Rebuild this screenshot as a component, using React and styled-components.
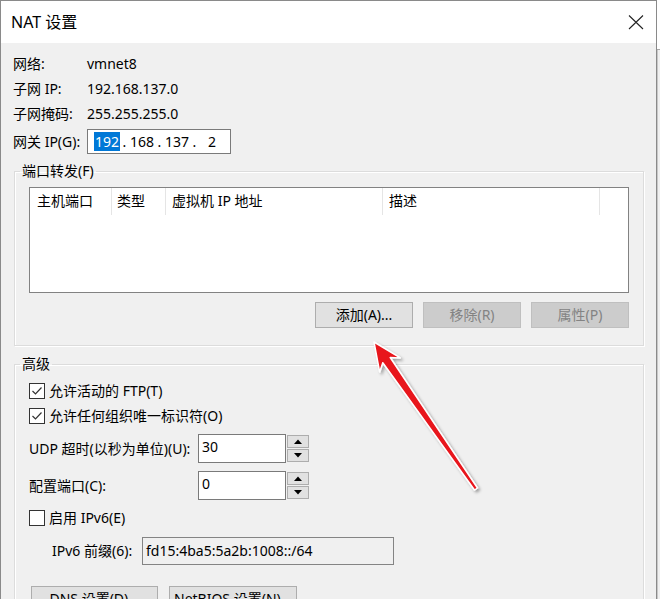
import React from 'react';
import styled, { createGlobalStyle } from 'styled-components';

const Global = createGlobalStyle`
  html, body { margin: 0; padding: 0; background: #f0f0f0; }
  body {
    width: 660px; height: 599px; overflow: hidden;
    font-family: "Noto Sans", "Noto Sans CJK SC", sans-serif;
    font-size: 14px; color: #000;
  }
  * { box-sizing: border-box; }
`;

const Screen = styled.div`
  position: relative;
  display: flex;
  width: 660px;
  height: 599px;
  overflow: hidden;
`;

const Dialog = styled.div`
  width: 657px;
  height: 640px;
  flex-shrink: 0;
  border: 1px solid #8a8a8a;
  border-bottom: none;
  background: #f0f0f0;
  display: flex;
  flex-direction: column;
`;

const TitleBar = styled.div`
  height: 42px;
  background: #fff;
  display: flex;
  align-items: center;
  justify-content: space-between;
  padding: 0 12px 0 10px;
  flex-shrink: 0;
`;

const Title = styled.div`
  font-size: 16px;
  line-height: 20px;
`;

const Body = styled.div`
  padding: 8px 11px 0 11px;
  display: flex;
  flex-direction: column;
`;

const InfoRow = styled.div`
  display: flex;
  align-items: center;
  height: 25px;
  line-height: 18px;
  margin-top: ${p => p.$mt || 0}px;
`;

const InfoLabel = styled.div`
  width: 75px;
  flex-shrink: 0;
  padding-left: 1px;
`;

const IpBox = styled.div`
  width: 144px;
  height: 25px;
  border: 1px solid #7a7a7a;
  background: #fff;
  display: flex;
  align-items: center;
  padding-left: 6px;
  line-height: 18px;
`;

const Octet = styled.span`
  width: 26px;
  text-align: center;
`;

const Selected = styled.span`
  background: #0078d7;
  color: #fff;
  padding: 0 1px;
`;

const Dot = styled.span`
  width: 9px;
  text-align: center;
`;

const Group = styled.fieldset`
  margin: ${p => p.$mt}px 0 0 2px;
  width: 630px;
  min-width: 0;
  padding: 0;
  border: 1px solid #dcdcdc;
  box-shadow: inset 1px 1px 0 #fff, 1px 1px 0 #fff;
`;

const Legend = styled.legend`
  margin-left: 5px;
  padding: 0 2px;
  height: 18px;
  line-height: 18px;
`;

const GroupBody = styled.div`
  padding: ${p => p.$pad};
  display: flex;
  flex-direction: column;
`;

const ListView = styled.div`
  height: 106px;
  border: 1px solid #828282;
  background: #fff;
`;

const ListHeader = styled.div`
  display: flex;
  height: 27px;
`;

const HeaderCell = styled.div`
  width: ${p => p.$w}px;
  padding-left: ${p => p.$pl}px;
  border-right: 1px solid #e5e5e5;
  line-height: 26px;
  flex-shrink: 0;
`;

const ButtonRow = styled.div`
  display: flex;
  justify-content: ${p => p.$start ? 'flex-start' : 'flex-end'};
  gap: ${p => p.$gap}px;
  margin-top: ${p => p.$mt}px;
  padding-left: ${p => p.$pl || 0}px;
`;

const Button = styled.button`
  width: ${p => p.$w}px;
  height: 26px;
  border: 1px solid ${p => p.disabled ? '#bfbfbf' : '#adadad'};
  background: ${p => p.disabled ? '#cccccc' : '#e1e1e1'};
  color: ${p => p.disabled ? '#838383' : '#000'};
  font-family: "Noto Sans", "Noto Sans CJK SC", sans-serif;
  font-size: 14px;
  line-height: 18px;
  padding: 0;
  flex-shrink: 0;
`;

const CheckRow = styled.label`
  display: flex;
  align-items: center;
  gap: 4px;
  height: 25px;
  line-height: 18px;
  margin-top: ${p => p.$mt || 0}px;
`;

const CheckBox = styled.span`
  width: 16px;
  height: 16px;
  border: 1px solid #333;
  background: #fff;
  display: flex;
  align-items: center;
  justify-content: center;
  flex-shrink: 0;
`;

const FieldRow = styled.div`
  display: flex;
  align-items: center;
  margin-top: ${p => p.$mt}px;
  padding-left: ${p => p.$pl || 0}px;
  line-height: 18px;
`;

const FieldLabel = styled.div`
  width: ${p => p.$w}px;
  flex-shrink: 0;
`;

const SpinInput = styled.div`
  width: 88px;
  height: 29px;
  border: 1px solid #7a7a7a;
  background: #fff;
  padding: 2px 3px 0;
  line-height: 20px;
`;

const Spinner = styled.div`
  display: flex;
  flex-direction: column;
  gap: 1px;
  margin-left: 1px;
  height: 29px;
  padding-top: 1px;
`;

const SpinButton = styled.div`
  width: 22px;
  height: 13px;
  border: 1px solid #adadad;
  background: #e1e1e1;
  display: flex;
  align-items: center;
  justify-content: center;
`;

const PrefixInput = styled.div`
  width: 252px;
  height: 28px;
  border: 1px solid #848484;
  background: #f0f0f0;
  padding: 3px 3px 0;
  line-height: 20px;
`;

const Backdrop = styled.div`
  flex: 1;
  display: flex;
  flex-direction: column;
`;

const BackTop = styled.div`
  height: 50px;
  background: #fff;
  border-bottom: 1px solid #a8a8a8;
`;

const BackRest = styled.div`
  flex: 1;
  background: #f0f0f0;
  border-left: 1px solid #c8c8c8;
`;

const Overlay = styled.svg`
  position: absolute;
  left: 0;
  top: 0;
  pointer-events: none;
`;

const Check = () => (
  <svg width="12" height="12" viewBox="0 0 12 12">
    <path d="M1.5 6 L4.5 9 L10.5 2.5" fill="none" stroke="#333" strokeWidth="1.2" />
  </svg>
);

const Up = () => (
  <svg width="8" height="5" viewBox="0 0 8 5"><path d="M0 5 L4 0.5 L8 5 Z" fill="#000" /></svg>
);
const Down = () => (
  <svg width="8" height="5" viewBox="0 0 8 5"><path d="M0 0 L4 4.5 L8 0 Z" fill="#000" /></svg>
);

export default function App() {
  return (
    <Screen>
      <Global />
      <Dialog>
        <TitleBar>
          <Title>NAT 设置</Title>
          <svg width="16" height="16" viewBox="0 0 16 16">
            <path d="M1 1.5 L15 15 M15 1.5 L1 15" stroke="#222" strokeWidth="1.1" fill="none" />
          </svg>
        </TitleBar>
        <Body>
          <InfoRow><InfoLabel>网络:</InfoLabel><span>vmnet8</span></InfoRow>
          <InfoRow><InfoLabel>子网 IP:</InfoLabel><span>192.168.137.0</span></InfoRow>
          <InfoRow><InfoLabel>子网掩码:</InfoLabel><span>255.255.255.0</span></InfoRow>
          <InfoRow $mt={3}>
            <InfoLabel>网关 IP(G):</InfoLabel>
            <IpBox>
              <Octet><Selected>192</Selected></Octet>
              <Dot>.</Dot>
              <Octet>168</Octet>
              <Dot>.</Dot>
              <Octet>137</Octet>
              <Dot>.</Dot>
              <Octet>2</Octet>
            </IpBox>
          </InfoRow>

          <Group $mt={8}>
            <Legend>端口转发(F)</Legend>
            <GroupBody $pad="7px 14px 17px 14px">
              <ListView>
                <ListHeader>
                  <HeaderCell $w={82} $pl={7}>主机端口</HeaderCell>
                  <HeaderCell $w={54} $pl={5}>类型</HeaderCell>
                  <HeaderCell $w={217} $pl={6}>虚拟机 IP 地址</HeaderCell>
                  <HeaderCell $w={217} $pl={6}>描述</HeaderCell>
                </ListHeader>
              </ListView>
              <ButtonRow $gap={10} $mt={9}>
                <Button $w={98}>添加(A)...</Button>
                <Button $w={98} disabled>移除(R)</Button>
                <Button $w={98} disabled>属性(P)</Button>
              </ButtonRow>
            </GroupBody>
          </Group>

          <Group $mt={9}>
            <Legend>高级</Legend>
            <GroupBody $pad="5px 14px 20px 14px">
              <CheckRow><CheckBox><Check /></CheckBox>允许活动的 FTP(T)</CheckRow>
              <CheckRow><CheckBox><Check /></CheckBox>允许任何组织唯一标识符(O)</CheckRow>
              <FieldRow $mt={6}>
                <FieldLabel $w={169}>UDP 超时(以秒为单位)(U):</FieldLabel>
                <SpinInput>30</SpinInput>
                <Spinner>
                  <SpinButton><Up /></SpinButton>
                  <SpinButton><Down /></SpinButton>
                </Spinner>
              </FieldRow>
              <FieldRow $mt={8}>
                <FieldLabel $w={169}>配置端口(C):</FieldLabel>
                <SpinInput>0</SpinInput>
                <Spinner>
                  <SpinButton><Up /></SpinButton>
                  <SpinButton><Down /></SpinButton>
                </Spinner>
              </FieldRow>
              <CheckRow $mt={5}><CheckBox />启用 IPv6(E)</CheckRow>
              <FieldRow $mt={7} $pl={23}>
                <FieldLabel $w={90}>IPv6 前缀(6):</FieldLabel>
                <PrefixInput>fd15:4ba5:5a2b:1008::/64</PrefixInput>
              </FieldRow>
              <ButtonRow $start $gap={11} $mt={21} $pl={2}>
                <Button $w={127}>DNS 设置(D)...</Button>
                <Button $w={128}>NetBIOS 设置(N)...</Button>
              </ButtonRow>
            </GroupBody>
          </Group>
        </Body>
      </Dialog>
      <Backdrop>
        <BackTop />
        <BackRest />
      </Backdrop>

      <Overlay width="660" height="599" viewBox="0 0 660 599">
        <defs>
          <filter id="arrowShadow" x="-20%" y="-20%" width="140%" height="140%">
            <feDropShadow dx="2" dy="2" stdDeviation="1.6" floodColor="#000" floodOpacity="0.35" />
          </filter>
        </defs>
        <polygon
          points="374,342 400.3,357.9 390.2,357.5 477.5,488 474.5,490 382.8,362.7 379.7,372.1"
          fill="#e8141b"
          stroke="#fff"
          strokeWidth="1.5"
          strokeLinejoin="round"
          filter="url(#arrowShadow)"
        />
      </Overlay>
    </Screen>
  );
}
